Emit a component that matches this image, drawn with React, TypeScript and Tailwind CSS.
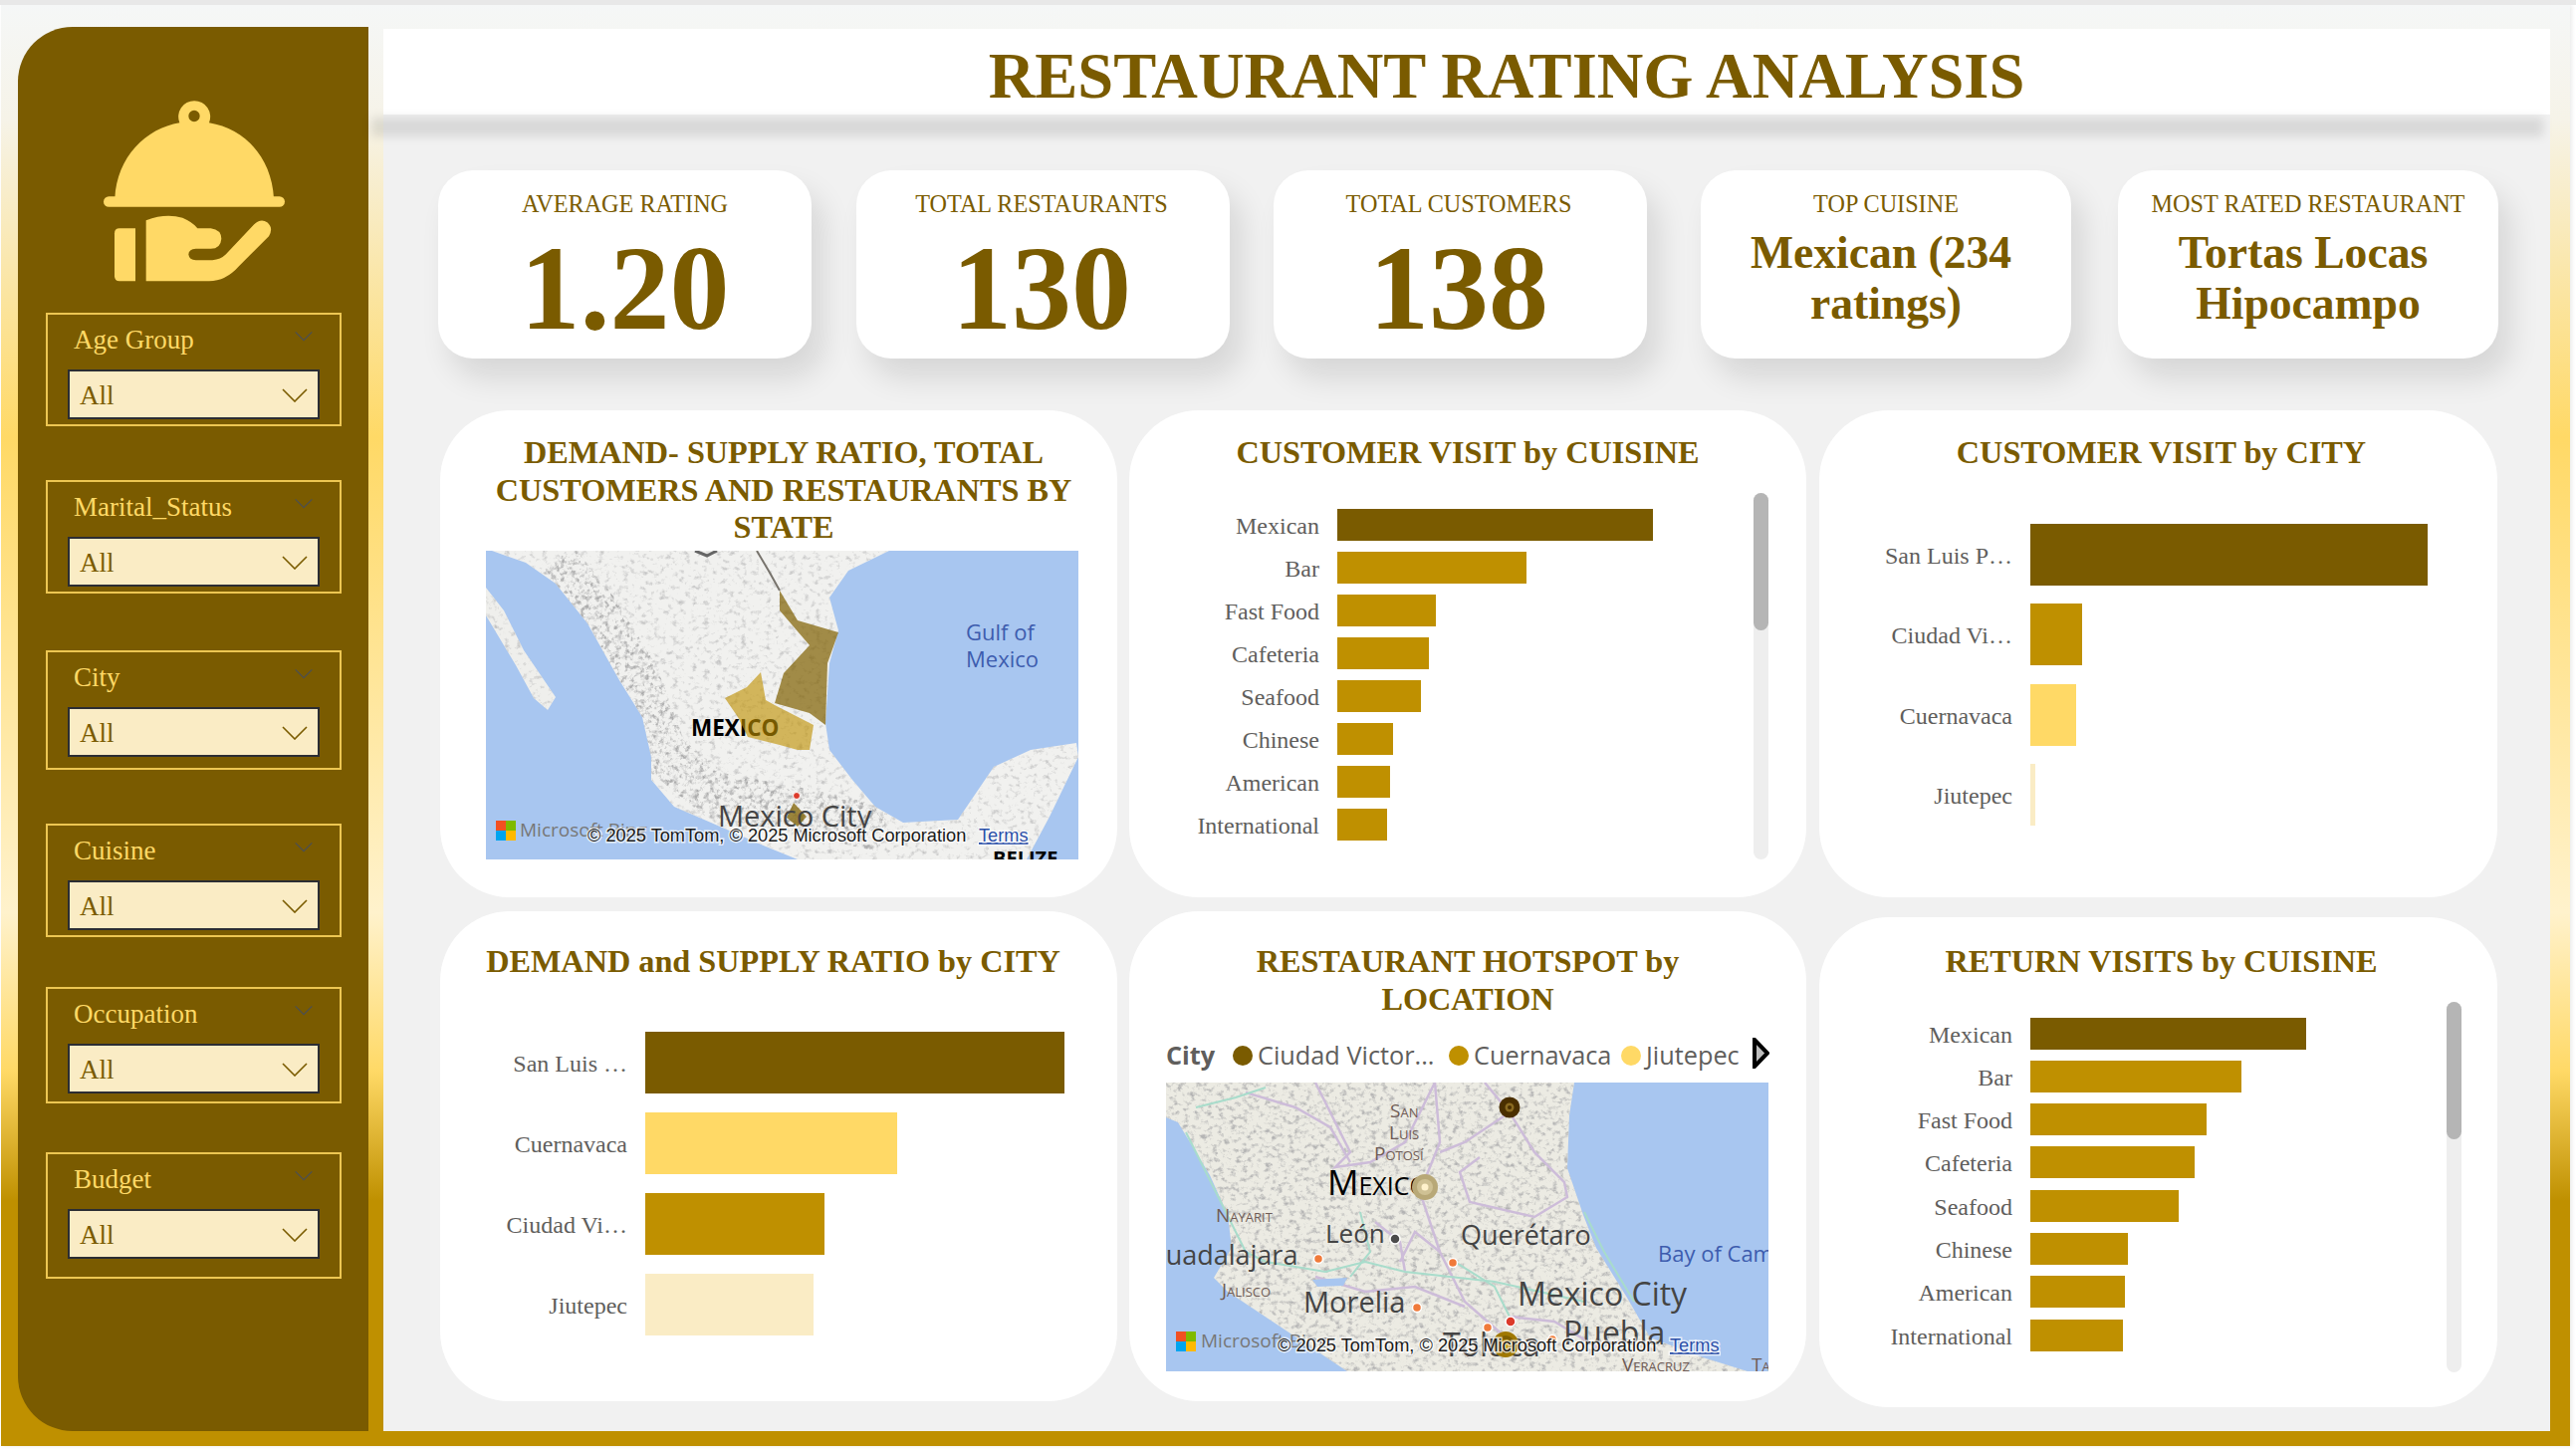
import React from "react";

const dark = "#7a5b00";
const gold = "#bf9000";
const yellow = "#ffd966";
const cream = "#faecc5";

const slicers = [
  { name: "Age Group", box: "mt-[30px] h-[114px]" },
  { name: "Marital_Status", box: "mt-[54px] h-[114px]" },
  { name: "City", box: "mt-[57px] h-[120px]" },
  { name: "Cuisine", box: "mt-[54px] h-[114px]" },
  { name: "Occupation", box: "mt-[50px] h-[117px]" },
  { name: "Budget", box: "mt-[49px] h-[127px]" },
];

const stats = [
  { label: "AVERAGE RATING", value: "1.20", box: "w-[375px]" },
  { label: "TOTAL RESTAURANTS", value: "130", box: "w-[375px] ml-[45px] pr-[3px]" },
  { label: "TOTAL CUSTOMERS", value: "138", box: "w-[375px] ml-[44px] pr-[3px]" },
  { label: "TOP CUISINE", lines: ["Mexican (234", "ratings)"], box: "w-[372px] ml-[54px]" },
  { label: "MOST RATED RESTAURANT", lines: ["Tortas Locas", "Hipocampo"], box: "w-[382px] ml-[47px]" },
];

const cuisineVisits = [
  { name: "Mexican", w: 317, c: dark },
  { name: "Bar", w: 190, c: gold },
  { name: "Fast Food", w: 99, c: gold },
  { name: "Cafeteria", w: 92, c: gold },
  { name: "Seafood", w: 84, c: gold },
  { name: "Chinese", w: 56, c: gold },
  { name: "American", w: 53, c: gold },
  { name: "International", w: 50, c: gold },
];

const cityVisits = [
  { name: "San Luis P…", w: 399, c: dark },
  { name: "Ciudad Vi…", w: 52, c: gold },
  { name: "Cuernavaca", w: 46, c: yellow },
  { name: "Jiutepec", w: 5, c: cream },
];

const cityRatio = [
  { name: "San Luis …", w: 421, c: dark },
  { name: "Cuernavaca", w: 253, c: yellow },
  { name: "Ciudad Vi…", w: 180, c: gold },
  { name: "Jiutepec", w: 169, c: cream },
];

const returnVisits = [
  { name: "Mexican", w: 277, c: dark },
  { name: "Bar", w: 212, c: gold },
  { name: "Fast Food", w: 177, c: gold },
  { name: "Cafeteria", w: 165, c: gold },
  { name: "Seafood", w: 149, c: gold },
  { name: "Chinese", w: 98, c: gold },
  { name: "American", w: 95, c: gold },
  { name: "International", w: 93, c: gold },
];

function Chevron({ className }: { className: string }) {
  return (
    <svg viewBox="0 0 26 14" fill="none" className={className}>
      <path d="M1 1 L13 13 L25 1" stroke="currentColor" strokeWidth="1.6" />
    </svg>
  );
}

function ServiceIcon() {
  return (
    <svg viewBox="300 290 570 560" className="ml-[82px] mt-[70px] h-[187px] w-[190px] shrink-0" fill={yellow}>
      <path
        fillRule="evenodd"
        d="M346 596 C352 470 440 385 541 368 A48 48 0 1 1 630 368 C735 385 818 470 825 596 Z M585 331 A17 17 0 1 0 585 365 A17 17 0 1 0 585 331 Z"
      />
      <rect x="312" y="590" width="546" height="32" rx="16" />
      <path d="M360 686 H408 V845 H360 Q345 845 345 830 V701 Q345 686 360 686 Z" />
      <path d="M440 662 Q500 640 550 655 Q580 668 595 686 H635 Q667 690 667 718 Q665 748 635 748 H590 Q568 750 568 765 Q570 782 590 782 H640 Q665 780 680 765 L765 675 Q785 655 805 668 Q825 685 810 710 L720 800 Q680 845 630 845 H440 Z" />
    </svg>
  );
}

function Slicer({ name, box }: { name: string; box: string }) {
  return (
    <div className={`ml-[28px] w-[297px] shrink-0 border-2 border-[#edc652] ${box}`}>
      <div className="mt-[10px] flex h-[31px] items-start justify-between pl-[26px] pr-[27px]">
        <span className="text-[27px] leading-[31px] text-[#ffd966]">{name}</span>
        <Chevron className="mt-[6px] h-[11px] w-[18px] text-[#4a4f55]" />
      </div>
      <div className="ml-[20px] mt-[14px] flex h-[50px] w-[253px] items-center justify-between border-2 border-[#2b2d33] bg-[#faecc5] px-[10px]">
        <span className="mt-[2px] text-[27px] leading-[31px] text-[#7a5b00]">All</span>
        <Chevron className="mt-[2px] h-[14px] w-[26px] text-[#7a5b00]" />
      </div>
    </div>
  );
}

function StatCard({ label, value, lines, box }: { label: string; value?: string; lines?: string[]; box: string }) {
  return (
    <div className={`h-[189px] shrink-0 rounded-[35px] bg-white pt-[20px] text-center text-[#7a5b00] shadow-[12px_20px_30px_rgba(0,0,0,0.11)] ${box}`}>
      <div className="text-[24.2px] leading-[28px]">{label}</div>
      {value ? (
        <div className="mt-[11px] text-[120px] font-bold leading-[120px]">{value}</div>
      ) : (
        <div className="mt-[9px] text-[45.6px] font-bold leading-[51px]">
          <div className="pr-[10px]">{lines?.[0]}</div>
          <div>{lines?.[1]}</div>
        </div>
      )}
    </div>
  );
}

function Title({ children, className }: { children: React.ReactNode; className: string }) {
  return <h2 className={`text-center text-[32.25px] font-bold leading-[37.5px] text-[#7a5b00] ${className}`}>{children}</h2>;
}

function Bars({
  rows,
  labelW,
  barH,
  gap,
  className,
}: {
  rows: { name: string; w: number; c: string }[];
  labelW: string;
  barH: string;
  gap: string;
  className: string;
}) {
  return (
    <div className={`flex flex-col ${gap} ${className}`}>
      {rows.map((r) => (
        <div key={r.name} className={`flex items-center ${barH}`}>
          <span className={`mt-[2px] shrink-0 whitespace-nowrap text-right text-[24px] leading-[28px] text-[#605e5c] ${labelW}`}>{r.name}</span>
          <span className="ml-[18px] block h-full" style={{ width: r.w, backgroundColor: r.c }} />
        </div>
      ))}
    </div>
  );
}

function Scroll({ className }: { className: string }) {
  return (
    <div className={`w-[15px] shrink-0 rounded-full bg-[#eeeeee] ${className}`}>
      <div className="h-[138px] rounded-full bg-[#b5b5b5]" />
    </div>
  );
}

const bingText = "[font-family:'Open_Sans',sans-serif]";
const arial = "[font-family:'Liberation_Sans',sans-serif]";

function MsLogo({ y }: { y: number }) {
  return (
    <g>
      <rect x="10" y={y} width="10" height="10" fill="#f25022" />
      <rect x="20" y={y} width="10" height="10" fill="#7fba00" />
      <rect x="10" y={y + 10} width="10" height="10" fill="#00a4ef" />
      <rect x="20" y={y + 10} width="10" height="10" fill="#ffb900" />
    </g>
  );
}

function Noise({ id, seed, freq, slope, cut, tone }: { id: string; seed: number; freq: string; slope: number; cut: number; tone: number }) {
  return (
    <filter id={id} x="-20%" y="-20%" width="140%" height="140%">
      <feTurbulence type="fractalNoise" baseFrequency={freq} numOctaves={5} seed={seed} />
      <feColorMatrix values={`0 0 0 0 ${tone}  0 0 0 0 ${tone}  0 0 0 0 ${tone}  ${slope} 0 0 0 ${cut}`} />
      <feComposite in2="SourceGraphic" operator="in" />
    </filter>
  );
}

function Attribution({ x, y, termsX }: { x: number; y: number; termsX: number }) {
  return (
    <>
      <text x={x} y={y} stroke="#fff" strokeOpacity="0.7" strokeWidth="3" paintOrder="stroke" className={`${arial} fill-[#1a1a1a] text-[18.2px]`}>
        © 2025 TomTom, © 2025 Microsoft Corporation
      </text>
      <text x={termsX} y={y} stroke="#fff" strokeOpacity="0.7" strokeWidth="3" paintOrder="stroke" className={`${arial} fill-[#2b4fa8] text-[18.2px] underline`}>
        Terms
      </text>
    </>
  );
}

function StateMap() {
  const land =
    "M6 0 L40 12 L70 33 L102 73 L134 130 L157 167 L166 207 L166 230 L189 257 L226 273 L281 297 L313 310 L543 310 L566 267 L595 207 L593 193 L547 200 L510 217 L474 270 L419 273 L391 257 L368 230 L345 200 L341 173 L345 113 L354 80 L345 47 L364 20 L405 0 Z";
  const baja = "M0 37 L18 60 L38 100 L55 125 L70 147 L62 160 L48 148 L30 115 L12 85 L0 65 Z";
  return (
    <svg viewBox="0 0 595 310" className="ml-[46px] mt-[4.5px] block h-[310px] w-[595px]">
      <defs>
        <Noise id="terrainA" seed={4} freq="0.16 0.2" slope={3} cut={-1.62} tone={0.55} />
        <Noise id="terrainA2" seed={9} freq="0.2" slope={3.6} cut={-1.8} tone={0.42} />
        <clipPath id="landA">
          <path d={land} />
        </clipPath>
      </defs>
      <rect width="595" height="310" fill="#a8c6f0" />
      <path d={land} fill="#f1f1ef" />
      <path d={baja} fill="#efefec" />
      <path d={land} filter="url(#terrainA)" />
      <path d={baja} filter="url(#terrainA)" />
      <g clipPath="url(#landA)">
        <path d="M70 10 L110 60 L150 125 L180 205 L230 245 L320 262 L400 280" stroke="#000" strokeWidth="46" fill="none" filter="url(#terrainA2)" />
      </g>
      <path d="M272 0 L285 22 L295 40" stroke="#77736c" strokeWidth="2" fill="none" />
      <path d="M210 0 L222 5 L232 0" stroke="#666" strokeWidth="3" fill="none" />
      <text x="206" y="186" className={`${bingText} fill-black text-[22.5px] font-bold`}>MEXICO</text>
      <path
        d="M276 122 L281 150 L290 155 L329 175 L325 200 L313 200 L295 195 L263 187 L253 167 L240 148 L262 137 Z"
        fill="#bf9000"
        fillOpacity="0.62"
      />
      <path
        d="M295 40 L313 70 L354 82 L343 113 L341 175 L325 163 L290 153 L299 123 L325 95 L295 60 Z"
        fill="#7f6000"
        fillOpacity="0.7"
      />
      <path d="M309 253 L322 267 L313 277 L302 268 Z" fill="#7f6000" fillOpacity="0.75" />
      <circle cx="312" cy="246" r="3.5" fill="#dc3a2a" stroke="#fff" strokeWidth="1" />
      <text x="482" y="90" className={`${bingText} fill-[#3d5cae] text-[22px]`}>Gulf of</text>
      <text x="482" y="117" className={`${bingText} fill-[#3d5cae] text-[22px]`}>Mexico</text>
      <text x="233" y="277" className={`${bingText} fill-[#444444] text-[29px]`}>Mexico City</text>
      <text x="509" y="316" className={`${bingText} fill-black text-[20px] font-bold`}>BELIZE</text>
      <MsLogo y={271} />
      <text x="34" y="287" className={`${bingText} fill-[#777777] text-[19px]`}>Microsoft Bing</text>
      <Attribution x={102} y={292} termsX={495} />
    </svg>
  );
}

function Dot({ x, y, c = "#f07a3a", r = 4.5 }: { x: number; y: number; c?: string; r?: number }) {
  return <circle cx={x} cy={y} r={r} fill={c} stroke="#fff" strokeWidth="1.5" />;
}

function HotspotMap() {
  const land =
    "M0 0 L410 0 L405 33 L403 86 L419 133 L432 166 L463 216 L486 256 L539 276 L584 290 L182 290 L146 266 L107 240 L62 210 L48 196 L66 166 L62 133 L44 93 L12 40 L0 35 Z";
  const small = `${bingText} fill-[#6f5b55] text-[19px] [font-variant-caps:small-caps]`;
  const city = `${bingText} fill-[#444444]`;
  return (
    <svg viewBox="0 0 605 290" className="mt-[7px] block h-[290px] w-[605px]">
      <defs>
        <Noise id="terrainB" seed={12} freq="0.17 0.21" slope={3.1} cut={-1.56} tone={0.45} />
      </defs>
      <rect width="605" height="290" fill="#a8c6f0" />
      <path d={land} fill="#ecebe3" />
      <path d={land} filter="url(#terrainB)" />
      <g fill="none" stroke="#cdbcd9" strokeWidth="2.5">
        <path d="M150 0 L185 70 L170 85 L205 80 L240 60 L270 0" />
        <path d="M270 0 L275 60 L255 110 L275 170 L300 220 L340 255" />
        <path d="M345 30 L370 70 L400 100 L403 115 L370 135 L305 120 L295 90 L315 75" />
        <path d="M80 10 L130 25 L165 45 L185 80" />
        <path d="M320 0 L345 30 L300 60 L275 70" />
        <path d="M240 190 L235 160 L210 140" />
        <path d="M150 195 L200 210 L250 205 L300 225" />
        <path d="M345 235 L390 240 L440 270" />
        <path d="M235 180 L250 150 L275 170" />
      </g>
      <g fill="none" stroke="#a8dccb" strokeWidth="2">
        <path d="M20 50 L60 130 L80 170 L100 180 L160 190 L200 180 L240 190 L330 200 L420 220" />
        <path d="M290 180 L330 205 L345 235" />
        <path d="M420 130 L440 170 L470 220" />
        <path d="M30 25 L70 15 L100 5" />
        <path d="M195 130 L205 170 L185 195" />
      </g>
      <path d="M147 198 L182 196 L178 204 L152 205 Z" fill="#a8c6f0" />
      <text x="225" y="35" className={small}>San</text>
      <text x="224" y="57" className={small}>Luis</text>
      <text x="209" y="78" className={small}>Potosí</text>
      <text x="50" y="140" className={small}>Nayarit</text>
      <text x="56" y="215" className={small}>Jalisco</text>
      <text x="458" y="290" className={small}>Veracruz</text>
      <text x="588" y="290" className={small}>Ta</text>
      <text x="162" y="113" className={`${bingText} fill-black text-[35px] [font-variant-caps:small-caps]`}>Mexico</text>
      <text x="160" y="161" className={`${city} text-[26px]`}>León</text>
      <text x="296" y="163" className={`${city} text-[27px]`}>Querétaro</text>
      <text x="-20" y="183" className={`${city} text-[27px]`}>Guadalajara</text>
      <text x="138" y="231" className={`${city} text-[29px]`}>Morelia</text>
      <text x="353" y="224" className={`${city} text-[32px]`}>Mexico City</text>
      <text x="399" y="263" className={`${city} text-[32px]`}>Puebla</text>
      <text x="278" y="275" className={`${city} text-[32px]`}>Toluca</text>
      <text x="494" y="180" className={`${bingText} fill-[#3d5cae] text-[22px]`}>Bay of Campeche</text>
      <Dot x={230} y={157} c="#4b4b4b" r={5} />
      <Dot x={153} y={177} />
      <Dot x={288} y={181} />
      <Dot x={252} y={226} />
      <Dot x={323} y={246} />
      <Dot x={388} y={258} />
      <Dot x={346} y={240} c="#dc3a2a" r={5} />
      <circle cx="345" cy="25" r="10.5" fill="#4a2f00" />
      <circle cx="345" cy="25" r="4.5" fill="#8a6a20" />
      <circle cx="345" cy="25" r="2" fill="#4a2f00" />
      <circle cx="260" cy="105" r="13" fill="#b8a877" />
      <circle cx="260" cy="105" r="8" fill="#cfc194" />
      <circle cx="260" cy="105" r="3.5" fill="#fff2cc" />
      <circle cx="341" cy="263" r="13" fill="#a07800" />
      <circle cx="341" cy="263" r="9" fill="#7f6000" />
      <circle cx="341" cy="263" r="5" fill="#bf9000" />
      <MsLogo y={250} />
      <text x="35" y="266" className={`${bingText} fill-[#777777] text-[19px]`}>Microsoft Bing</text>
      <Attribution x={112} y={270} termsX={506} />
    </svg>
  );
}

function Legend() {
  return (
    <div className="ml-[37px] mt-[18px] flex h-[40px] items-center font-['Open_Sans',sans-serif] text-[25.3px] text-[#605e5c]">
      <span className="w-[52px] shrink-0 font-bold">City</span>
      <span className="ml-[15px] size-[20px] shrink-0 rounded-full bg-[#7a5b00]" />
      <span className="ml-[5px] w-[180px] shrink-0 whitespace-nowrap">Ciudad Victor...</span>
      <span className="ml-[12px] size-[20px] shrink-0 rounded-full bg-[#bf9000]" />
      <span className="ml-[5px] w-[136px] shrink-0 whitespace-nowrap">Cuernavaca</span>
      <span className="ml-[12px] size-[20px] shrink-0 rounded-full bg-[#ffd966]" />
      <span className="ml-[5px] w-[98px] shrink-0 whitespace-nowrap">Jiutepec</span>
      <svg viewBox="0 0 17 31" className="-mt-[6px] ml-[9px] h-[31px] w-[17px] shrink-0">
        <path d="M2 2 L15 15.5 L2 29 Z" fill="#bdbdbd" stroke="#000" strokeWidth="4" />
      </svg>
    </div>
  );
}

export default function App() {
  return (
    <div className="box-border h-[1459px] w-[2587px] overflow-hidden border-t-[5px] border-[#e8e8e8] bg-white pl-[1px] font-['Liberation_Serif',serif]">
      <div className="flex h-[1447px] w-[2580px] bg-[linear-gradient(180deg,#f5f7f7_0%,#f6f3e8_8%,#ffd966_30%,#fff2cc_63%,#ffd966_74%,#bf9000_83%,#bf9000_100%)] pl-[17px] pt-[22px] shadow-[2px_0_4px_rgba(0,0,0,0.08)]">
        <aside className="flex h-[1410px] w-[352px] shrink-0 flex-col rounded-l-[55px] bg-[#7a5b00]">
          <ServiceIcon />
          {slicers.map((s) => (
            <Slicer key={s.name} name={s.name} box={s.box} />
          ))}
        </aside>
        <main className="ml-[15px] mt-[2px] h-[1408px] w-[2176px] shrink-0 bg-[#f1f1f1]">
          <header className="relative z-10 flex h-[86px] items-center justify-center bg-white pl-[80px] pt-[10px]">
            <h1 className="text-[64.5px] font-bold leading-[66px] text-[#7a5b00]">RESTAURANT RATING ANALYSIS</h1>
            <div className="absolute left-[-12px] right-[7px] top-[89px] -z-10 h-[19px] bg-black/10 blur-[5px]" />
          </header>
          <section className="ml-[55px] mt-[56px] flex">
            {stats.map((s) => (
              <StatCard key={s.label} {...s} />
            ))}
          </section>
          <section className="ml-[57px] mt-[52px] flex">
            <div className="h-[489px] w-[680px] shrink-0 rounded-[70px] bg-white pt-[24px]">
              <Title className="pl-[44px] pr-[34px]">DEMAND- SUPPLY RATIO, TOTAL CUSTOMERS AND RESTAURANTS BY STATE</Title>
              <StateMap />
            </div>
            <div className="ml-[12px] h-[489px] w-[680px] shrink-0 rounded-[70px] bg-white pt-[24px]">
              <Title className="px-[40px]">CUSTOMER VISIT by CUISINE</Title>
              <div className="flex items-start">
                <Bars rows={cuisineVisits} labelW="w-[190px]" barH="h-[32px]" gap="gap-[11px]" className="ml-[1px] mt-[37px] w-[626px]" />
                <Scroll className="mt-[21px] h-[368px]" />
              </div>
            </div>
            <div className="ml-[13px] h-[489px] w-[681px] shrink-0 rounded-[70px] bg-white pt-[24px]">
              <Title className="pl-[46px] pr-[40px]">CUSTOMER VISIT by CITY</Title>
              <Bars rows={cityVisits} labelW="w-[194px]" barH="h-[62px]" gap="gap-[18.5px]" className="mt-[52px]" />
            </div>
          </section>
          <section className="ml-[57px] mt-[14px] flex items-start">
            <div className="h-[492px] w-[680px] shrink-0 rounded-[70px] bg-white pt-[32px]">
              <Title className="pl-[29px] pr-[40px]">DEMAND and SUPPLY RATIO by CITY</Title>
              <Bars rows={cityRatio} labelW="w-[188px]" barH="h-[62px]" gap="gap-[19px]" className="mt-[51px]" />
            </div>
            <div className="ml-[12px] h-[492px] w-[680px] shrink-0 rounded-[70px] bg-white pt-[32px]">
              <Title className="px-[40px]">RESTAURANT HOTSPOT by LOCATION</Title>
              <Legend />
              <div className="ml-[37px]">
                <HotspotMap />
              </div>
            </div>
            <div className="ml-[13px] mt-[6px] h-[492px] w-[681px] shrink-0 rounded-[70px] bg-white pt-[26px]">
              <Title className="pl-[46px] pr-[40px]">RETURN VISITS by CUISINE</Title>
              <div className="flex items-start">
                <Bars rows={returnVisits} labelW="w-[194px]" barH="h-[32px]" gap="gap-[11.3px]" className="mt-[37px] w-[630px]" />
                <Scroll className="mt-[21px] h-[372px]" />
              </div>
            </div>
          </section>
        </main>
      </div>
    </div>
  );
}
